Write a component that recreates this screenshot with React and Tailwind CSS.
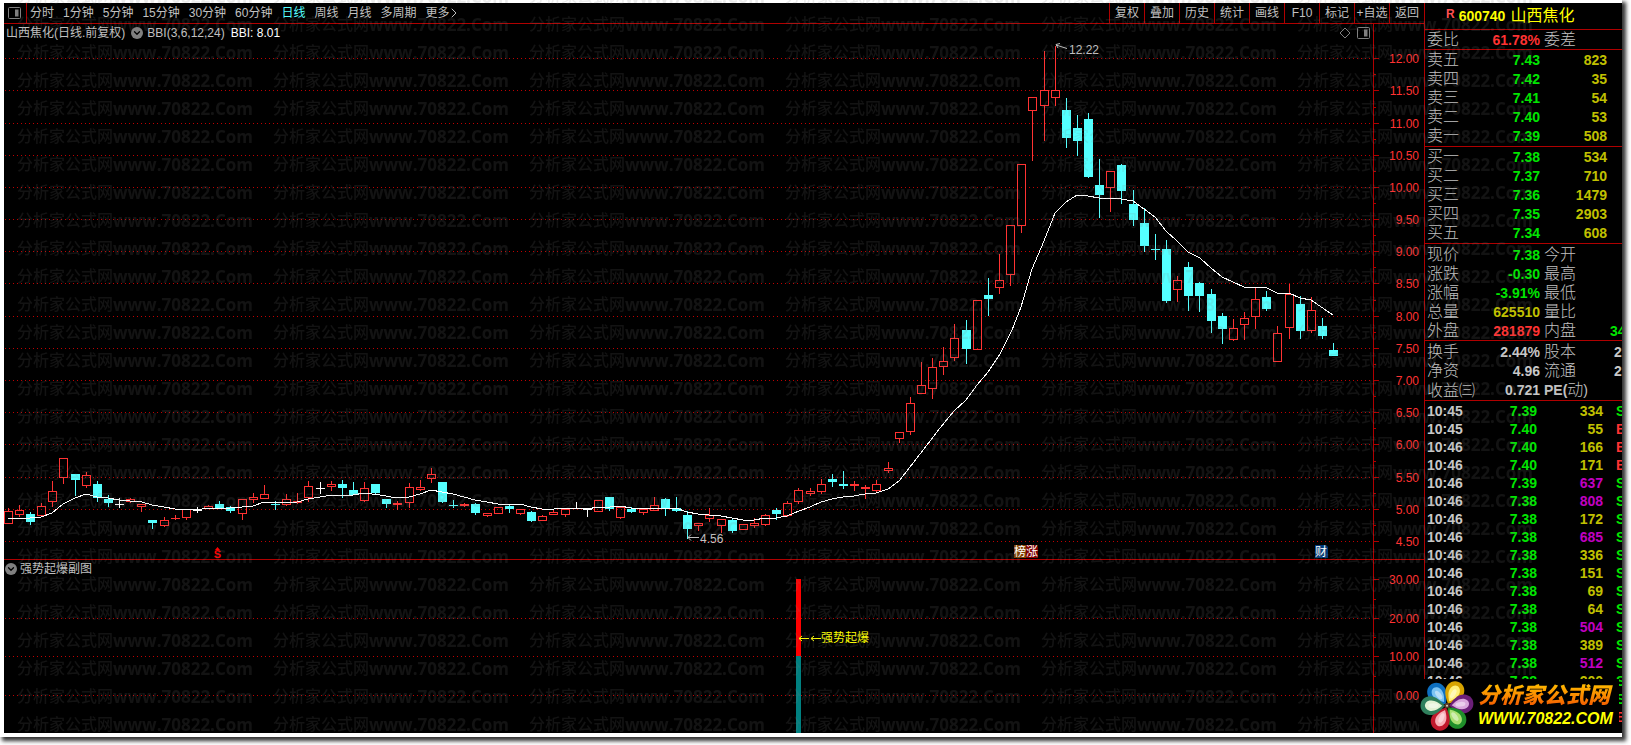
import React from "react";
import { ChevronDown, ChevronRight } from "lucide-react";

const PERIODS = ["分时", "1分钟", "5分钟", "15分钟", "30分钟", "60分钟", "日线", "周线", "月线", "多周期"];
const TOOLS = ["复权", "叠加", "历史", "统计", "画线", "F10", "标记", "+自选", "返回"];

// [x, high, bodyTop, bodyBottom, low, kind]  r = rise, f = fall, w = unchanged
const CANDLES = [
  [8, 508, 511, 524, 524, "r"], [19, 505, 510, 515, 517, "r"], [30, 512, 514, 522, 525, "f"], [41, 503, 506, 516, 517, "r"],
  [52, 481, 491, 502, 507, "r"], [63, 458, 458, 478, 484, "r"], [75, 474, 474, 480, 496, "f"], [86, 472, 475, 486, 488, "r"],
  [97, 481, 484, 498, 502, "f"], [108, 495, 499, 503, 507, "f"], [119, 498, 504, 505, 508, "w"], [130, 498, 499, 502, 503, "r"],
  [141, 504, 504, 507, 512, "r"], [152, 520, 520, 523, 529, "f"], [164, 517, 520, 526, 527, "r"], [175, 515, 518, 519, 520, "r"],
  [186, 509, 509, 518, 520, "r"], [197, 507, 510, 511, 513, "w"], [208, 505, 506, 509, 509, "r"], [219, 501, 504, 509, 509, "f"],
  [230, 506, 507, 511, 513, "f"], [242, 499, 499, 514, 520, "r"], [253, 493, 497, 500, 503, "r"], [264, 485, 494, 499, 499, "r"],
  [275, 501, 504, 505, 510, "f"], [286, 494, 499, 505, 506, "r"], [297, 493, 501, 503, 504, "r"], [308, 481, 486, 498, 502, "r"],
  [320, 482, 488, 489, 494, "w"], [331, 481, 484, 487, 491, "r"], [342, 480, 484, 488, 498, "f"], [353, 482, 490, 495, 495, "f"],
  [364, 482, 488, 501, 502, "r"], [375, 484, 484, 493, 494, "f"], [386, 499, 499, 504, 508, "f"], [397, 501, 503, 505, 510, "r"],
  [409, 483, 487, 503, 508, "r"], [420, 480, 487, 490, 491, "r"], [431, 468, 474, 479, 483, "r"], [442, 482, 482, 502, 503, "f"],
  [453, 500, 505, 506, 508, "f"], [464, 503, 504, 506, 507, "r"], [475, 503, 504, 513, 515, "f"], [487, 513, 513, 516, 517, "r"],
  [498, 507, 507, 514, 514, "r"], [509, 505, 506, 509, 513, "f"], [520, 509, 509, 514, 515, "r"], [531, 511, 512, 521, 522, "f"],
  [542, 515, 516, 521, 521, "r"], [553, 509, 512, 515, 515, "r"], [565, 508, 509, 515, 517, "r"], [576, 502, 508, 509, 509, "w"],
  [587, 509, 509, 510, 517, "w"], [598, 500, 500, 512, 512, "r"], [609, 497, 497, 509, 511, "f"], [620, 507, 507, 518, 519, "r"],
  [631, 507, 509, 512, 513, "f"], [643, 509, 509, 513, 515, "r"], [654, 497, 505, 511, 511, "r"], [665, 498, 499, 509, 516, "f"],
  [676, 497, 508, 511, 512, "f"], [687, 511, 515, 529, 539, "f"], [698, 523, 523, 526, 531, "r"], [709, 508, 515, 519, 522, "r"],
  [721, 519, 519, 526, 533, "r"], [732, 519, 520, 531, 533, "f"], [743, 524, 524, 530, 530, "r"], [754, 518, 523, 526, 528, "r"],
  [765, 514, 515, 525, 526, "r"], [776, 508, 510, 514, 520, "f"], [787, 501, 503, 516, 517, "r"], [798, 488, 490, 502, 504, "r"],
  [810, 488, 491, 494, 496, "r"], [821, 479, 484, 492, 494, "r"], [832, 474, 479, 482, 487, "f"], [843, 471, 484, 486, 489, "f"],
  [854, 481, 484, 486, 491, "r"], [865, 485, 487, 489, 499, "r"], [876, 480, 484, 491, 493, "r"], [888, 462, 468, 471, 473, "r"],
  [899, 432, 432, 439, 443, "r"], [910, 397, 403, 432, 435, "r"], [921, 362, 385, 394, 394, "r"], [932, 358, 367, 389, 399, "r"],
  [943, 347, 361, 367, 375, "r"], [954, 324, 338, 358, 361, "r"], [966, 320, 330, 349, 364, "f"], [977, 300, 300, 350, 350, "r"],
  [988, 278, 295, 299, 316, "f"], [999, 254, 280, 288, 294, "r"], [1010, 225, 225, 275, 286, "r"], [1021, 164, 164, 226, 233, "r"],
  [1032, 97, 97, 111, 161, "r"], [1044, 51, 90, 106, 141, "r"], [1055, 46, 90, 98, 106, "r"], [1066, 98, 110, 138, 148, "f"],
  [1077, 115, 128, 141, 156, "f"], [1088, 113, 119, 177, 178, "f"], [1099, 159, 185, 195, 218, "f"], [1110, 171, 171, 188, 212, "r"],
  [1121, 164, 165, 191, 204, "f"], [1133, 190, 204, 220, 226, "f"], [1144, 208, 223, 246, 252, "f"], [1155, 234, 249, 250, 260, "f"],
  [1166, 240, 249, 301, 303, "f"], [1177, 276, 280, 290, 302, "r"], [1188, 262, 267, 296, 311, "f"], [1199, 282, 283, 296, 312, "f"],
  [1211, 289, 294, 321, 333, "f"], [1222, 313, 316, 329, 344, "f"], [1233, 319, 328, 340, 341, "r"], [1244, 312, 318, 325, 340, "r"],
  [1255, 288, 299, 317, 329, "r"], [1266, 291, 297, 309, 311, "f"], [1277, 326, 333, 362, 362, "r"], [1289, 284, 294, 328, 339, "r"],
  [1300, 296, 304, 331, 339, "f"], [1311, 297, 310, 331, 333, "r"], [1322, 318, 326, 336, 339, "f"], [1333, 343, 350, 356, 356, "f"],
];

const BBI =
  "8,519 30,518 41,517 52,513 63,504 75,498 86,494 97,497 108,498 119,500 130,501 142,502 152,505 164,507 175,509 186,509 197,510 208,508 230,508 242,507 253,506 264,502 275,503 297,502 308,499 320,497 333,495 353,495 364,493 380,495 397,498 409,497 420,494 431,490 442,492 453,494 464,497 475,500 487,502 498,504 520,504 531,507 542,509 554,509 565,508 587,509 598,507 610,507 620,506 631,508 676,508 687,512 698,514 709,515 721,516 732,518 743,520 754,520 765,518 776,518 787,516 799,511 810,507 821,502 832,499 843,497 854,496 865,494 876,493 888,489 899,481 910,467 927,445 940,428 954,411 966,400 977,385 988,372 1000,354 1012,330 1021,307 1032,269 1044,241 1055,213 1066,202 1077,195 1088,196 1099,198 1110,198 1121,199 1133,201 1144,209 1155,217 1166,231 1177,241 1188,252 1200,258 1211,268 1222,277 1233,282 1244,287 1255,287 1267,288 1277,293 1289,293 1300,298 1311,300 1333,315";

const PRICE_AXIS = [
  [58, "12.00"], [90, "11.50"], [123, "11.00"], [155, "10.50"], [187, "10.00"], [219, "9.50"], [251, "9.00"], [283, "8.50"],
  [316, "8.00"], [348, "7.50"], [380, "7.00"], [412, "6.50"], [444, "6.00"], [477, "5.50"], [509, "5.00"], [541, "4.50"],
];
const SUB_AXIS = [[579, "30.00"], [618, "20.00"], [656, "10.00"], [695, "0.00"]];

const SELL = [["卖五", "7.43", "823"], ["卖四", "7.42", "35"], ["卖三", "7.41", "54"], ["卖二", "7.40", "53"], ["卖一", "7.39", "508"]];
const BUY = [["买一", "7.38", "534"], ["买二", "7.37", "710"], ["买三", "7.36", "1479"], ["买四", "7.35", "2903"], ["买五", "7.34", "608"]];

const G = "text-[#00e600]";
const Y = "text-[#c0c000]";
const R = "text-[#ff3232]";
const W = "text-[#c8c8c8]";
const M = "text-[#c000c0]";

const QUOTE = [
  ["现价", "7.38", G, "今开", "", ""],
  ["涨跌", "-0.30", G, "最高", "", ""],
  ["涨幅", "-3.91%", G, "最低", "", ""],
  ["总量", "625510", Y, "量比", "", ""],
  ["外盘", "281879", R, "内盘", "34", G],
];
const FUNDAMENTALS = [
  ["换手", "2.44%", W, "股本", "2", W],
  ["净资", "4.96", W, "流通", "2", W],
  ["收益㈢", "0.721", W, "PE(动)", "", ""],
];

const TICKS = [
  ["10:45", "7.39", "334", Y, "S"], ["10:45", "7.40", "55", Y, "B"], ["10:46", "7.40", "166", Y, "B"], ["10:46", "7.40", "171", Y, "B"],
  ["10:46", "7.39", "637", M, "S"], ["10:46", "7.38", "808", M, "S"], ["10:46", "7.38", "172", Y, "S"], ["10:46", "7.38", "685", M, "S"],
  ["10:46", "7.38", "336", Y, "S"], ["10:46", "7.38", "151", Y, "S"], ["10:46", "7.38", "69", Y, "S"], ["10:46", "7.38", "64", Y, "S"],
  ["10:46", "7.38", "504", M, "S"], ["10:46", "7.38", "389", Y, "S"], ["10:46", "7.38", "512", M, "S"], ["10:46", "7.38", "200", Y, "S"],
  ["10:46", "7.38", "88", Y, "S"], ["10:46", "7.38", "61", Y, "B"],
];

function Candle({ c }) {
  const [x, high, top, bottom, low, kind] = c;
  if (kind === "r" && bottom - top > 2) {
    return (
      <g fill="#ff3232">
        {top > high && <rect x={x} y={high} width="1" height={top - high} />}
        {low > bottom && <rect x={x} y={bottom} width="1" height={low - bottom} />}
        <rect x={x - 3.5} y={top + 0.5} width="8" height={bottom - top - 1} fill="none" stroke="#ff3232" />
      </g>
    );
  }
  const color = kind === "r" ? "#ff3232" : kind === "f" ? "#54ffff" : "#ffffff";
  return (
    <g fill={color}>
      <rect x={x} y={high} width="1" height={low - high} />
      <rect x={x - 4} y={top} width="9" height={Math.max(1, bottom - top)} />
    </g>
  );
}

function Axis({ labels, top, bottom, grid }) {
  return (
    <g>
      <g shapeRendering="crispEdges" stroke="#b00000">
        <line x1="1373.5" x2="1373.5" y1={top} y2={bottom} />
        {grid.map(([y]) => (
          <line key={y} x1="5" x2="1371" y1={y + 0.5} y2={y + 0.5} strokeDasharray="1 3" stroke="#c00000" />
        ))}
        {labels.map(([y], i) => (
          <g key={y}>
            <line x1="1374" x2="1379" y1={y + 0.5} y2={y + 0.5} />
            {labels[i + 1] && (
              <line x1="1374" x2="1376" y1={Math.round((y + labels[i + 1][0]) / 2) + 0.5} y2={Math.round((y + labels[i + 1][0]) / 2) + 0.5} />
            )}
          </g>
        ))}
      </g>
      {labels.map(([y, t]) => (
        <text key={t} x="1419" y={y + 5} textAnchor="end" fill="#ff3232" fontSize="12">{t}</text>
      ))}
    </g>
  );
}

function PaneTitle({ children, icons }) {
  return (
    <div className="flex h-5 items-stretch whitespace-nowrap">
      <div className="flex flex-1 items-center pb-0.5">
        {children}
        <div className="ml-auto flex items-center gap-1.5 pr-[3px]">{icons}</div>
      </div>
      <div className="w-[51px] border-l border-[#b00000]" />
    </div>
  );
}

function Toggle({ label }) {
  return (
    <button aria-label={label} className="flex size-3 items-center justify-center rounded-full bg-[#808080] text-black">
      <ChevronDown size={10} strokeWidth={3} />
    </button>
  );
}

function PanelIcon({ className }) {
  return (
    <svg viewBox="0 0 13 12" className={className} fill="none" stroke="#808080">
      <rect x="0.5" y="0.5" width="12" height="11" rx="1" />
      <rect x="7" y="2.5" width="3.5" height="7" fill="#808080" stroke="none" />
    </svg>
  );
}

function Book({ rows }) {
  return (
    <table className="w-full table-fixed border-separate border-spacing-0 border-b border-[#b00000] pb-px">
      <tbody>
        {rows.map(([name, price, vol]) => (
          <tr key={name} className="h-[19px]">
            <th scope="row" className="w-10 p-0 pl-0.5 text-left text-base leading-[19px] font-light text-[#c0c0c0]">{name}</th>
            <td className={`w-[75px] p-0 text-right ${G}`}>{price}</td>
            <td className={`p-0 pr-[15px] text-right ${Y}`}>{vol}</td>
          </tr>
        ))}
      </tbody>
    </table>
  );
}

function Pairs({ rows }) {
  return (
    <table className="w-full table-fixed border-separate border-spacing-0 border-b border-[#b00000] pt-px">
      <tbody>
        {rows.map(([a, av, ac, b, bv, bc]) => (
          <tr key={a} className="h-[19px]">
            <th scope="row" className="w-[50px] p-0 pl-0.5 text-left text-base leading-[19px] font-light whitespace-nowrap text-[#c0c0c0]">{a}</th>
            <td className={`w-[65px] p-0 text-right ${ac}`}>{av}</td>
            <th scope="row" className="w-[70px] p-0 pl-1 text-left text-base leading-[19px] font-light whitespace-nowrap text-[#c0c0c0]">
              {b.startsWith("PE") ? <><span className="text-sm font-bold">PE(</span>动<span className="text-sm">)</span></> : b}
            </th>
            <td className={`p-0 ${bv.length === 1 ? "pl-1" : ""} ${bc}`}>{bv}</td>
          </tr>
        ))}
      </tbody>
    </table>
  );
}

function Flower() {
  const petals = [
    [-38, "#0d6fc0", "#7cc4f4"], [28, "#d8a400", "#fff07a"], [84, "#6b1f78", "#d9a8dc"],
    [144, "#1f8f2a", "#a8e070"], [204, "#c0182c", "#f7b0b8"], [270, "#2f7f5c", "#e4f2d4"],
  ];
  return (
    <svg viewBox="-80 -74 160 150" className="h-[52px] w-[54px] shrink-0">
      {petals.map(([a, dark, light]) => (
        <g key={a} transform={`rotate(${a})`}>
          <path d="M0 -6 C-18 -22 -31 -38 -27 -56 C-20 -86 20 -86 27 -56 C31 -38 18 -22 0 -6Z" fill={dark} />
          <path d="M0 -14 C-10 -26 -18 -38 -15 -52 C-10 -70 10 -70 15 -52 C18 -38 10 -26 0 -14Z" fill={light} />
          <ellipse cx="0" cy="-40" rx="7" ry="15" fill="#ffffff" opacity="0.45" />
        </g>
      ))}
      <circle r="8" fill="#5a3a2a" />
      <circle r="3" fill="#d8d8c0" />
    </svg>
  );
}

function Watermark() {
  return (
    <div aria-hidden="true" className="pointer-events-none absolute inset-0 overflow-hidden text-[#808080] opacity-[0.15] select-none">
      <div className="-mt-[17px] pl-[17px]">
        {Array.from({ length: 27 }, (_, r) => (
          <div key={r} className="flex h-7 items-center">
            {Array.from({ length: 6 }, (_, c) => (
              <div key={c} className="flex w-64 shrink-0 items-center text-base font-medium whitespace-nowrap">
                分析家公式网
                <span className="font-['Open_Sans',sans-serif] text-[17px] font-bold">www.70822.Com</span>
              </div>
            ))}
          </div>
        ))}
      </div>
    </div>
  );
}

export default function App() {
  return (
    <div className="relative min-h-screen overflow-hidden bg-white pr-[9px] font-['Liberation_Sans','Noto_Sans_CJK_SC',sans-serif] text-xs text-[#c0c0c0]">
      <div className="bg-white pt-[3px] pb-1 pl-1 shadow-[3px_3px_4px_1px_rgba(0,0,0,0.8)]">
        <div className="flex bg-black">
          <main className="min-w-0 flex-1">
            <header className="flex h-[21px] items-stretch justify-between border-b border-[#b00000] whitespace-nowrap">
              <nav className="flex items-center">
                <button aria-label="侧栏" className="flex h-full w-[23px] items-center border-r border-[#b00000] pl-1">
                  <PanelIcon className="h-3 w-[13px]" />
                </button>
                <div className="flex gap-[9px] pl-[3px]">
                  {PERIODS.map((p) => (
                    <button key={p} className={p === "日线" ? "text-[#54ffff]" : ""}>{p}</button>
                  ))}
                  <button className="flex items-center">更多<ChevronRight size={16} strokeWidth={1.5} className="-ml-1" /></button>
                </div>
              </nav>
              <div className="flex">
                {TOOLS.map((t) => (
                  <button key={t} className="w-[35px] border-l border-[#b00000] text-center">{t}</button>
                ))}
              </div>
            </header>

            <section>
              <PaneTitle
                icons={
                  <>
                    <svg viewBox="0 0 12 12" className="size-3" fill="none" stroke="#808080"><path d="M6 1 L11 6 L6 11 L1 6Z" /></svg>
                    <PanelIcon className="h-3 w-[13px]" />
                  </>
                }
              >
                <h1 className="pr-1.5 pl-0.5">山西焦化(日线.前复权)</h1>
                <Toggle label="指标菜单" />
                <span className="pl-1">BBI(3,6,12,24)</span>
                <span className="pl-1.5 text-white">BBI: 8.01</span>
              </PaneTitle>
              <svg viewBox="4 44 1420 515" className="block h-auto w-full overflow-visible" role="img" aria-label="日线">
                <Axis labels={PRICE_AXIS} grid={PRICE_AXIS} top={44} bottom={559} />
                <g shapeRendering="crispEdges">
                  {CANDLES.map((c) => <Candle key={c[0]} c={c} />)}
                  <polyline points={BBI} fill="none" stroke="#ffffff" />
                </g>
                <g fill="none" stroke="#c0c0c0">
                  <path d="M1067 48.5 L1056 45 M1060 43.5 L1056 44.5 L1058 48" />
                  <path d="M699 537.5 H688 M691 534.5 L688 537.5 L691 540.5" />
                </g>
                <g fill="#c0c0c0" fontSize="12">
                  <text x="1069" y="54">12.22</text>
                  <text x="700" y="543">4.56</text>
                </g>
                <path d="M217.5 547 L220 550 H215Z" fill="#ff0000" />
                <text x="217.5" y="558" textAnchor="middle" fontSize="11" fontWeight="bold" fill="#ff0000">S</text>
                <rect x="1014" y="545" width="12" height="13" fill="#804000" />
                <path d="M1026 545 H1036 L1038 547 V558 H1026Z" fill="#800000" />
                <path d="M1315 545 H1326 L1328 547 V558 H1315Z" fill="#003878" />
                <g fill="#ffffff" fontSize="12">
                  <text x="1014" y="556">榜涨</text>
                  <text x="1315" y="556">财</text>
                </g>
              </svg>
            </section>

            <section className="border-t border-[#b00000]">
              <PaneTitle>
                <div className="flex items-center gap-[3px] pl-px">
                  <Toggle label="副图菜单" />
                  <h2>强势起爆副图</h2>
                </div>
              </PaneTitle>
              <svg viewBox="4 580 1420 153" className="block h-auto w-full overflow-visible" role="img" aria-label="强势起爆副图">
                <Axis labels={SUB_AXIS} grid={SUB_AXIS.slice(1)} top={580} bottom={733} />
                <rect x="796" y="579" width="5" height="77" fill="#ff0000" />
                <rect x="796" y="656" width="5" height="77" fill="#008080" />
                <g stroke="#ffff00" fill="none">
                  <path d="M809 638.5 H799 M802 636 L799 638.5 L802 641" />
                  <path d="M821 638.5 H811 M814 636 L811 638.5 L814 641" />
                </g>
                <text x="821" y="642" fontSize="12" fill="#ffff00">强势起爆</text>
              </svg>
            </section>
          </main>

          <aside className="relative w-[198px] shrink-0 border-l border-[#b00000] text-sm leading-[18px] font-bold">
            <div className="overflow-hidden">
              <div className="flex h-[27px] items-center border-b border-[#b00000] pl-[21px] text-[#ffff00]">
                <span className="pr-1 pb-1 text-xs text-[#ff5050]">R</span>
                <span className="pr-[5px]">600740</span>
                <span className="text-base font-normal">山西焦化</span>
              </div>
              <div className="flex h-5 items-center border-b border-[#b00000] pl-0.5 text-base font-light">
                <span className="w-[38px]">委比</span>
                <span className="w-[75px] text-right text-sm font-bold text-[#ff3232]">61.78%</span>
                <span className="pl-1">委差</span>
              </div>
              <Book rows={SELL} />
              <Book rows={BUY} />
              <Pairs rows={QUOTE} />
              <Pairs rows={FUNDAMENTALS} />
              <table className="mt-px w-full table-fixed">
                <tbody>
                  {TICKS.map(([time, price, vol, color, side], i) => (
                    <tr key={i} className="h-[18px]">
                      <td className="w-[50px] p-0 pl-0.5 text-[#c8c8c8]">{time}</td>
                      <td className={`w-[62px] p-0 text-right ${G}`}>{price}</td>
                      <td className={`w-[66px] p-0 text-right ${color}`}>{vol}</td>
                      <td className={`p-0 pl-[13px] ${side === "S" ? G : R}`}>{side}</td>
                    </tr>
                  ))}
                </tbody>
              </table>
            </div>
            <a
              href="#home"
              className="absolute right-[3px] bottom-0 z-10 flex h-[54px] w-[200px] items-center gap-1 bg-black pl-px whitespace-nowrap italic"
            >
              <Flower />
              <span className="flex flex-col">
                <span className="bg-linear-to-b from-[#ffc000] to-[#f04800] bg-clip-text text-[22px] leading-[26px] font-black text-transparent">分析家公式网</span>
                <span className="text-base leading-[20px] text-[#ffff00]">WWW.70822.COM</span>
              </span>
            </a>
          </aside>
        </div>
      </div>
      <Watermark />
    </div>
  );
}
